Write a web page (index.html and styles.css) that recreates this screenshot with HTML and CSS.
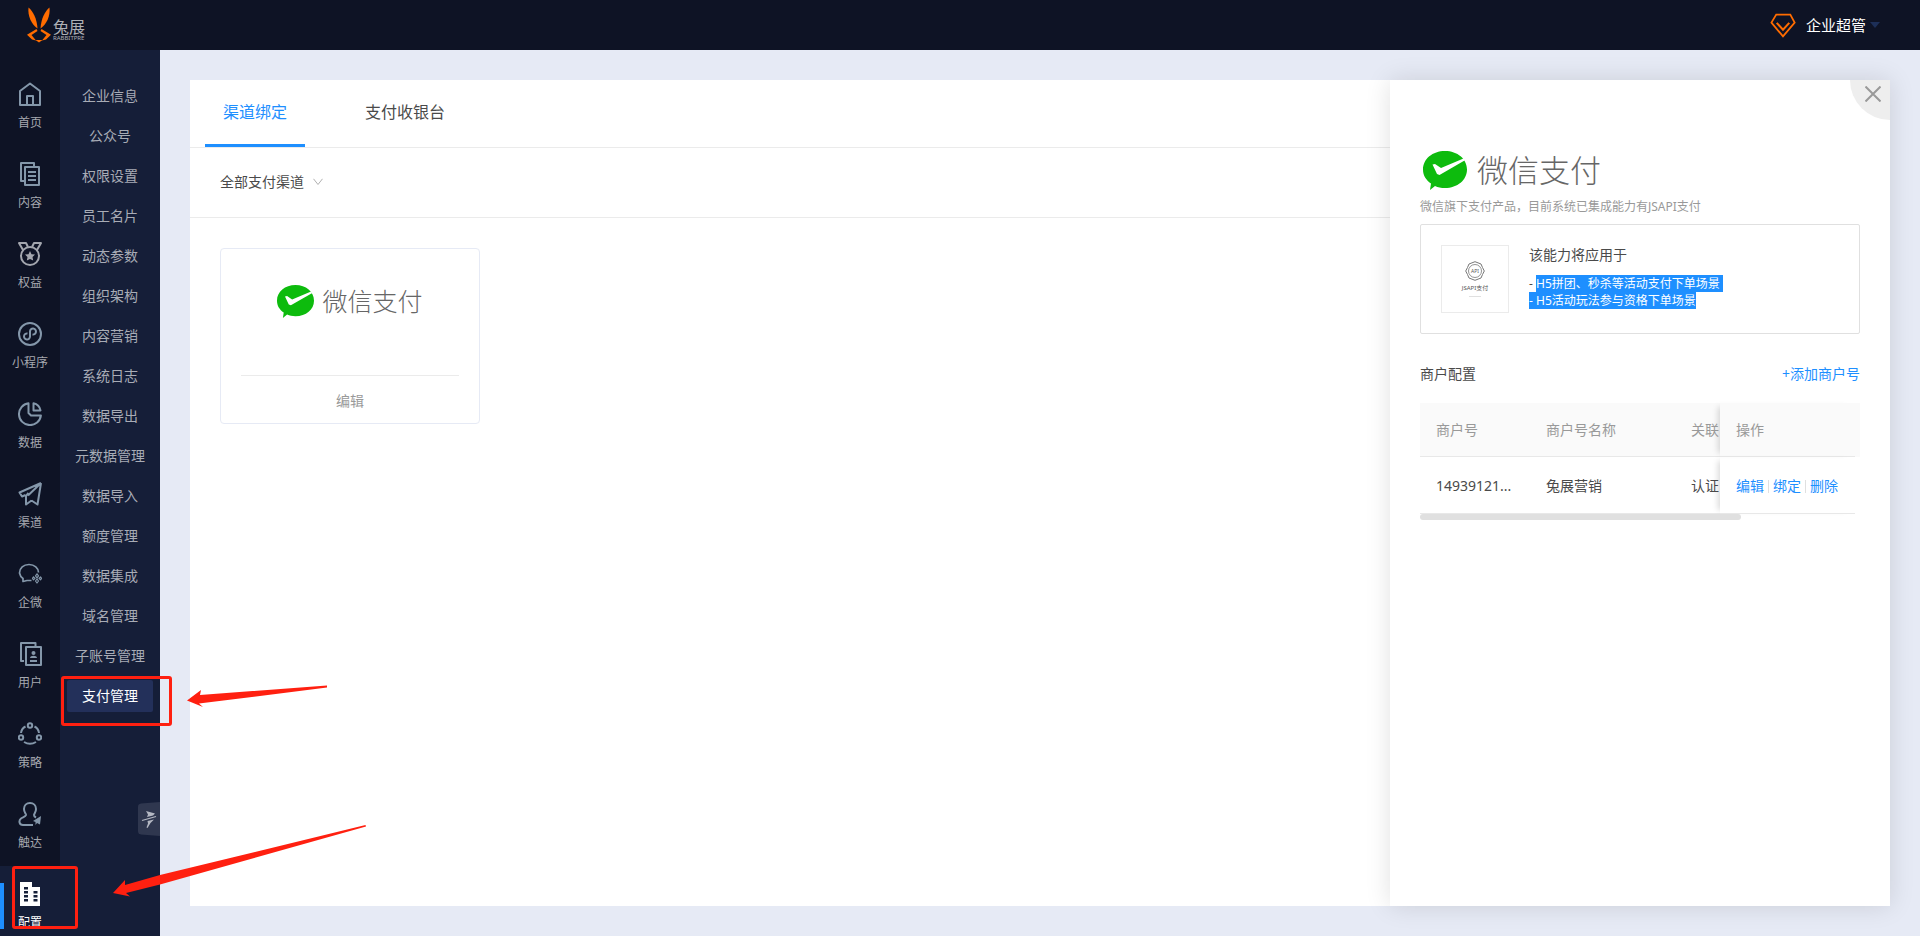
FILE: index.html
```html
<!DOCTYPE html>
<html lang="zh-CN">
<head>
<meta charset="utf-8">
<title>支付管理</title>
<link rel="stylesheet" href="styles.css">
</head>
<body>
<svg class="defs" aria-hidden="true">
  <symbol id="wxpay" viewBox="0 0 44 39">
    <path fill="#0dbb0d" d="M22 0C34.500 0 44 8 44 18.500S34.500 37 22 37c-4 0-7-.6-10-2l-5 4 1-6.500C3 29 0 24.500 0 18.500 0 8 9.500 0 22 0z"/>
    <path fill="#fff" d="M9.500 13.500l2.500-.5 6 4L40.500 7.500l1.500 1.800L16.500 24l-2.500-1z"/>
  </symbol>
</svg>
<header class="topbar">
  <a class="brand" href="#">
    <svg class="brand-mark" viewBox="0 0 24 36" aria-hidden="true">
      <g fill="#ff6c00">
        <path d="M1.500.5C6 4 10 12 10.500 21.500 4.500 17.500.5 9 1.500.5z"/>
        <path d="M22.500.5C18 4 14 12 13.500 21.500 19.500 17.500 23.500 9 22.500.5z"/>
        <path d="M9.500 22L0 27.800 5 32.500l4 1-4.500-5.500 6-4z"/>
        <path d="M14.500 22l9.500 5.800-5 4.700-4 1 4.500-5.500-6-4z"/>
        <path d="M8.500 33h7L12 35.500z"/>
      </g>
    </svg>
    <span class="brand-text"><span class="brand-name">兔展</span><span class="brand-sub">RABBITPRE</span></span>
  </a>
  <button class="account" type="button">
    <svg class="gem" viewBox="0 0 24 24" fill="none" stroke="#ff6c00" aria-hidden="true">
      <path stroke-width="1.700" d="M5.500 1.500h13.500l4.200 7.700L12 22.500.9 9.200z"/>
      <path stroke-width="2" d="M6 9.500l6 6.500 6-6.500"/>
    </svg>
    <span>企业超管</span>
    <i class="caret"></i>
  </button>
</header>
<div class="shell">
  <nav class="rail" aria-label="主导航">
    <a href="#"><svg viewBox="0 0 24 24"><path d="M2 9L12 1.500 22 9v14H2zM9 23v-9h6v9"/></svg>首页</a>
    <a href="#"><svg viewBox="0 0 24 24"><path d="M6 19H3V1h13v3M7 5h14v18H7zM10 10h8M10 14h8M10 18h8"/></svg>内容</a>
    <a href="#" class="warm"><svg viewBox="0 0 24 24"><circle cx="12" cy="14" r="9"/><path d="M5 8L1 1h7l2 4M19 8l4-7h-7l-2 4"/><path class="solid" d="M12 9l1.500 3.200 3.500.4-2.500 2.500.7 3.500L12 17l-3.200 1.600.7-3.500L7 12.600l3.500-.4z"/></svg>权益</a>
    <a href="#"><svg viewBox="0 0 24 24"><circle cx="12" cy="12" r="11"/><path d="M9.500 11.500a3 3 0 1 0 2.500 3V9.500a3 3 0 1 1 2.500 3"/></svg>小程序</a>
    <a href="#"><svg viewBox="0 0 24 24"><path d="M10.500 1.200A11 11 0 1 0 22.900 13.500H13L10.500 11zM15.500 1.300a9 9 0 0 1 7 7.200h-7z"/></svg>数据</a>
    <a href="#"><svg viewBox="0 0 24 24"><path d="M23 1L1.500 10.500 4 14.500 7.500 13M23 1l-3.500 21.500-6-4M23 1L10 13.500M8 14v8.500l5.500-4M8 14l2.500-3"/></svg>渠道</a>
    <a href="#"><svg viewBox="0 0 24 24"><path stroke-width="1.700" d="M13.500 18.500H9l-4 1V16.500A8.500 8.500 0 0 1 1.500 11c0-5 4-8.500 9.500-8.500s9.500 3.500 9.500 8"/><path stroke-width="1.200" d="M19 11.800l1.500 2-1.500 2-1.500-2zM22.500 14.800l1 1.500-1 1.500-1.500-1.500zM15.500 14.800l1.500 1.500-1.500 1.500-1-1.500zM19 17l1.500 2-1.500 2-1.500-2z"/></svg>企微</a>
    <a href="#"><svg viewBox="0 0 24 24"><path d="M6 19H3V1h14.500v3M8 5h15v18H8z"/><circle class="solid" cx="15.500" cy="11" r="2"/><path class="solid" d="M12 16c0-3 7-3 7 0z"/><path d="M12 19h7"/></svg>用户</a>
    <a href="#"><svg viewBox="0 0 24 24"><circle cx="12" cy="3.500" r="2.200"/><circle cx="3" cy="15.500" r="2.200"/><circle cx="21" cy="15.500" r="2.200"/><path d="M7.500 4.500Q3.500 6.500 3 11M16.500 4.500q4 2 4.500 6.500M6 20q6 3.500 12 0"/></svg>策略</a>
    <a href="#"><svg viewBox="0 0 24 24"><path d="M15 23H5c-4 0-4.500-4.500-2-6.500 1.500-1.300 4.500-1.500 5-3.500.2-1-2-2.500-2-6 0-3.500 2.500-6 6-6s6 2.500 6 6c0 3-1.500 4-2 6 0 1 1 2 2 2.500"/><path class="solid" d="M23 14l-8 5 2.500 1v3l1.500-2 3 1.500z"/></svg>触达</a>
    <a href="#" class="on"><svg viewBox="0 0 24 24"><path fill="#fff" stroke="none" d="M2 0h12v5h8v19H2z"/><path stroke="#162039" stroke-dasharray="2.500 1.500" d="M8 5v15M17.500 9v11" stroke-width="4"/></svg>配置</a>
  </nav>
  <nav class="submenu" aria-label="配置">
    <a href="#">企业信息</a>
    <a href="#">公众号</a>
    <a href="#">权限设置</a>
    <a href="#">员工名片</a>
    <a href="#">动态参数</a>
    <a href="#">组织架构</a>
    <a href="#">内容营销</a>
    <a href="#">系统日志</a>
    <a href="#">数据导出</a>
    <a href="#">元数据管理</a>
    <a href="#">数据导入</a>
    <a href="#">额度管理</a>
    <a href="#">数据集成</a>
    <a href="#">域名管理</a>
    <a href="#">子账号管理</a>
    <a href="#" class="on">支付管理</a>
    <button class="pin" type="button" aria-label="收起菜单">
      <svg viewBox="0 0 22 34" aria-hidden="true"><path fill="#2f374f" d="M3 1.500L22 0v34L3 32.500Q0 32 0 29V4.500Q0 2 3 1.500z"/><path fill="#b4b8c3" d="M8 9l9 2.500-2 2-6 1.500 1-2.500zM9.500 19l6.500-1.500-3.500 3.500-3 5-1-.5 1.500-4z"/><path stroke="#b4b8c3" stroke-width="1.300" d="M4 18.500L18 14.500"/></svg>
    </button>
  </nav>
  <main class="content">
    <section class="panel">
      <div class="tabs">
        <button type="button" class="tab on">渠道绑定</button>
        <button type="button" class="tab">支付收银台</button>
      </div>
      <div class="filter">
        <button type="button">全部支付渠道
          <svg viewBox="0 0 10 8" aria-hidden="true"><path d="M.5.800L5 6.500 9.500.8" fill="none" stroke="#b0b0b0"/></svg>
        </button>
      </div>
      <div class="cards">
        <article class="card">
          <div class="wx"><svg aria-hidden="true"><use href="#wxpay"/></svg><span>微信支付</span></div>
          <button type="button">编辑</button>
        </article>
      </div>
      <aside class="drawer">
        <button class="close" type="button" aria-label="关闭"><svg viewBox="0 0 16 16" aria-hidden="true"><path d="M.5.5l15 15M15.500.5l-15 15" stroke="#999" stroke-width="2"/></svg></button>
        <div class="wx large"><svg aria-hidden="true"><use href="#wxpay"/></svg><span>微信支付</span></div>
        <p class="desc">微信旗下支付产品，目前系统已集成能力有JSAPI支付</p>
        <div class="ability">
          <div class="thumb">
            <svg viewBox="0 0 20 20" aria-hidden="true"><g fill="none" stroke="#777"><path d="M10 .7L16 3l1.500 3.500L19.300 10l-1.800 3.500L16 17l-6 2.300L4 17l-1.500-3.500L.7 10l1.800-3.500L4 3z"/><circle cx="10" cy="10" r="6.500" stroke-width=".8"/></g><text x="10" y="12" text-anchor="middle">API</text></svg>
            <span>JSAPI支付</span>
            <i></i>
          </div>
          <div>
            <h2>该能力将应用于</h2>
            <p>- <mark>H5拼团、秒杀等活动支付下单场景&nbsp;</mark></p>
            <p><mark>- H5活动玩法参与资格下单场景</mark></p>
          </div>
        </div>
        <div class="merchant-head"><h2>商户配置</h2><a href="#">+添加商户号</a></div>
        <div class="merchant-wrap">
          <table>
            <thead><tr><th class="c-id">商户号</th><th class="c-name">商户号名称</th><th class="c-link">关联</th><th class="fixed">操作</th></tr></thead>
            <tbody><tr><td>14939121...</td><td>兔展营销</td><td>认证</td><td class="fixed"><div class="ops"><a href="#">编辑</a><a href="#">绑定</a><a href="#">删除</a></div></td></tr></tbody>
          </table>
        </div>
        <div class="scrollbar"></div>
      </aside>
    </section>
  </main>
</div>
<svg class="marks" aria-hidden="true">
  <g fill="none" stroke="#ff2010" stroke-width="3">
    <rect x="62.500" y="677.500" width="108" height="47" rx="1.500"/>
    <rect x="13.500" y="867.500" width="63" height="60" rx="1.500"/>
  </g>
  <g fill="#ff2010">
    <path d="M187 700.500L201 690l-1 5 127-9.500v2L199 703.500l4 3.500z"/>
    <path d="M113 893l12-13v5L160 875 365.500 825l.5 1.500L160 884.500 126 893l4 3.500z"/>
  </g>
</svg>
</body>
</html>
```

FILE: styles.css
```css
* { box-sizing: border-box; }

body {
  margin: 0;
  height: 100vh;
  display: flex;
  flex-direction: column;
  overflow: hidden;
  position: relative;
  background: #e6eaf5;
  color: #4a4a4a;
  font: 14px/20px "Noto Sans", "Noto Sans CJK SC", sans-serif;
}

a { color: inherit; text-decoration: none; }
h2, p { margin: 0; font-weight: 400; }
h2 { font-size: 14px; }

button {
  margin: 0;
  padding: 0;
  border: 0;
  background: none;
  color: inherit;
  font: inherit;
}

svg { display: block; }
.defs { position: absolute; width: 0; height: 0; }

/* Top bar */
.topbar {
  flex: none;
  height: 50px;
  padding: 0 40px 0 27px;
  display: flex;
  justify-content: space-between;
  align-items: center;
  background: #0e1325;
}

.brand { display: flex; align-items: flex-end; gap: 2px; }
.brand-mark { width: 24px; height: 36px; }
.brand-text { display: flex; flex-direction: column; padding-bottom: 2px; color: #aeb0b5; }
.brand-name { font-size: 16px; line-height: 18px; }
.brand-sub { font-size: 6px; line-height: 5px; }

.account { display: flex; align-items: center; color: #fff; font-size: 15px; }
.gem { width: 26px; height: 25px; margin-right: 10px; }
.caret {
  margin-left: 4px;
  border: 5px solid transparent;
  border-top: 6px solid #1d2f58;
  border-bottom: 0;
}

/* Navigation */
.shell { flex: 1; min-height: 0; display: flex; }

.rail {
  flex: none;
  width: 60px;
  padding-top: 16px;
  overflow: hidden;
  background: #0e1325;
  color: #a6a9b0;
}

.rail a {
  height: 80px;
  padding-top: 16px;
  display: flex;
  flex-direction: column;
  align-items: center;
  gap: 8px;
  font-size: 12px;
  line-height: 18px;
}

.rail svg {
  flex: none;
  width: 24px;
  height: 24px;
  fill: none;
  stroke: #8497aa;
  stroke-width: 2;
  stroke-linejoin: round;
}

.rail .solid { fill: #8497aa; stroke: none; }
.rail .warm svg { stroke: #a3a6ae; }
.rail .warm .solid { fill: #a3a6ae; }
.rail .on {
  color: #fff;
  background: linear-gradient(#1e8fff, #1e8fff) 0 17px / 4px 46px no-repeat #151e38;
}

.submenu {
  flex: none;
  position: relative;
  width: 100px;
  padding: 30px 7px 0;
  display: flex;
  flex-direction: column;
  gap: 8px;
  background: #151e38;
  color: #a8acb6;
}

.submenu a { line-height: 32px; border-radius: 2px; text-align: center; }
.submenu .on { background: #23305a; color: #fff; }
.pin { position: absolute; right: 0; bottom: 100px; width: 22px; height: 34px; }

/* Main panel */
.content { flex: 1; min-width: 0; padding: 30px; display: flex; }
.panel { flex: 1; min-width: 0; position: relative; background: #fff; }

.tabs {
  height: 68px;
  padding: 0 15px;
  display: flex;
  gap: 50px;
  border-bottom: 1px solid #ebebeb;
  font-size: 16px;
}

.tab { width: 100px; border-bottom: 3px solid transparent; }
.tab.on { color: #1e8fff; border-bottom-color: #1e8fff; }

.filter { height: 70px; padding: 0 30px 2px; display: flex; border-bottom: 1px solid #ebebeb; }
.filter button { display: flex; align-items: center; gap: 9px; }
.filter svg { width: 10px; height: 8px; }

.cards { padding: 30px; display: flex; }
.card {
  width: 260px;
  height: 176px;
  padding: 0 20px;
  display: flex;
  flex-direction: column;
  border: 1px solid #e6eaf5;
  border-radius: 4px;
}
.card button { height: 48px; padding-top: 2px; border-top: 1px solid #ebebeb; color: #999; }
.card .wx { flex: 1; padding-top: 36px; align-items: flex-start; justify-content: center; }

.wx { display: flex; align-items: center; gap: 8px; color: #666; font-size: 25px; line-height: 32px; }
.wx svg { width: 37px; height: 33px; }
.wx span { font-weight: 300; }
.wx.large { gap: 10px; font-size: 31px; line-height: 40px; padding-left: 3px; }
.wx.large svg { width: 44px; height: 39px; }

/* Drawer */
.drawer {
  position: absolute;
  top: 0;
  right: 0;
  bottom: 0;
  width: 500px;
  padding: 70px 30px 0;
  background: #fff;
  box-shadow: 0 0 24px rgba(0, 0, 0, 0.12);
}

.close {
  position: absolute;
  top: 0;
  right: 0;
  width: 40px;
  height: 40px;
  padding: 6px 0 0 15px;
  display: flex;
  align-items: flex-start;
  background: #eee;
  border-bottom-left-radius: 40px;
}
.close svg { width: 16px; height: 16px; }

.desc { margin: 8px 0; color: #999; font-size: 12px; line-height: 18px; }

.ability {
  height: 110px;
  padding: 20px;
  display: flex;
  gap: 20px;
  border: 1px solid #e0e0e0;
  border-radius: 2px;
}
.ability p { font-size: 12px; line-height: 17px; }
.ability h2 { margin-bottom: 10px; }
mark { display: inline-block; background: #1e8fff; color: #fff; }

.thumb {
  width: 68px;
  height: 68px;
  padding-top: 15px;
  display: flex;
  flex-direction: column;
  align-items: center;
  border: 1px solid #ebebeb;
  color: #555;
  font-size: 6px;
  line-height: 8px;
}
.thumb svg { width: 20px; height: 20px; margin-bottom: 3px; }
.thumb text { font-size: 5px; fill: #555; }
.thumb i { width: 12px; margin-top: 4px; border-top: 1px solid #e0e0e0; }

.merchant-head { margin: 30px 0 19px; display: flex; justify-content: space-between; }
.merchant-head a, .ops { color: #1e8fff; }

.merchant-wrap { padding-right: 5px; background: linear-gradient(#fafafa, #fafafa) 0 0 / 100% 54px no-repeat; }
table { width: 100%; table-layout: fixed; border-collapse: separate; border-spacing: 0; }
th, td { padding: 0 0 0 16px; border-bottom: 1px solid #e8e8e8; text-align: left; font-weight: 400; white-space: nowrap; }
th { height: 54px; color: #999; background: #fafafa; }
td { height: 57px; padding-top: 2px; }
.c-id { width: 110px; }
.c-name { width: 145px; }
.c-link { width: 45px; }
.fixed { box-shadow: -6px 0 6px -4px rgba(0, 0, 0, 0.15); }

.ops { display: flex; }
.ops a + a { margin-left: 4px; padding-left: 5px; background: linear-gradient(#e0e0e0, #e0e0e0) 0 4px / 1px 13px no-repeat; }

.scrollbar { width: 73%; height: 6px; border-radius: 3px; background: #e0e0e0; }

/* Callouts over the page */
.marks { position: absolute; top: 0; left: 0; width: 100%; height: 100%; pointer-events: none; }
```
